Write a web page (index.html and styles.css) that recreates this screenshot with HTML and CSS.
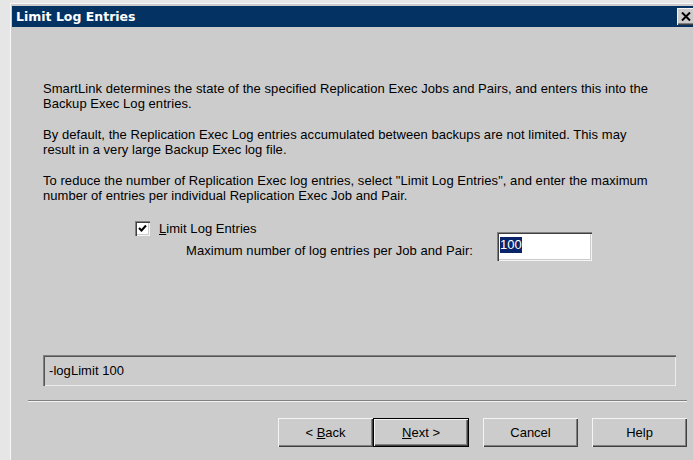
FILE: index.html
```html
<!DOCTYPE html>
<html lang="en">
<head>
<meta charset="utf-8">
<title>Limit Log Entries</title>
<link rel="stylesheet" href="styles.css">
</head>
<body>
<div class="window">
  <div class="titlebar">
    <span class="title">Limit Log Entries</span>
    <span class="close" aria-label="Close">
      <svg width="10" height="9" viewBox="0 0 10 9"><path d="M1 0.5 L9 8.5 M9 0.5 L1 8.5" stroke="#000" stroke-width="2" fill="none"/></svg>
    </span>
  </div>
  <div class="content">
    <p>SmartLink determines the state of the specified Replication Exec Jobs and Pairs, and enters this into the<br>Backup Exec Log entries.</p>
    <p>By default, the Replication Exec Log entries accumulated between backups are not limited. This may<br>result in a very large Backup Exec log file.</p>
    <p>To reduce the number of Replication Exec log entries, select "Limit Log Entries", and enter the maximum<br>number of entries per individual Replication Exec Job and Pair.</p>

    <label class="option">
      <span class="checkbox">
        <svg width="9" height="9" viewBox="0 0 9 9"><path d="M1 4 L3.5 6.5 L8 1.5" stroke="#000" stroke-width="2" fill="none"/></svg>
      </span>
      <span><u>L</u>imit Log Entries</span>
    </label>

    <div class="limit-row">
      <span class="limit-label">Maximum number of log entries per Job and Pair:</span>
      <span class="field"><span class="selected">100</span></span>
    </div>

    <div class="cmdline">-logLimit 100</div>
  </div>
  <div class="separator"></div>
  <div class="buttons">
    <span class="pair">
      <button class="btn">&lt; <u>B</u>ack</button>
      <button class="btn default"><u>N</u>ext &gt;</button>
    </span>
    <button class="btn">Cancel</button>
    <button class="btn">Help</button>
  </div>
</div>
</body>
</html>
```

FILE: styles.css
```css
html, body {
  margin: 0;
  height: 100%;
  overflow: hidden;
}

body {
  background: #e6e6e6;
  font-family: "Liberation Sans", Arial, sans-serif;
  font-size: 13px;
  letter-spacing: 0.05px;
  color: #000;
}

.window {
  margin: 3px 0 0 10px;
  width: 691px;
  height: 470px;
  box-sizing: border-box;
  border-top: 1px solid #f7f7f7;
  border-left: 1px solid #f7f7f7;
  background: #cccccc;
  padding: 2px 0 0 1px;
}

/* caption bar */
.titlebar {
  height: 21px;
  background: #043363;
  display: flex;
  align-items: center;
  justify-content: space-between;
  padding: 0 6px 0 4px;
}

.title {
  color: #fff;
  font-family: "DejaVu Sans", Verdana, sans-serif;
  font-weight: bold;
  font-size: 12.5px;
  letter-spacing: 0;
}

.close {
  width: 18px;
  height: 17px;
  box-sizing: border-box;
  background: #cccccc;
  display: flex;
  align-items: center;
  justify-content: center;
  box-shadow: inset 1px 1px #f4f4f4, inset -1px -1px #404040, inset -2px -2px #808080;
}

/* dialog body */
.content {
  padding: 54px 0 0 31px;
}

.content p {
  margin: 0 0 16px;
  line-height: 15px;
}

.option {
  display: flex;
  align-items: center;
  margin: 18px 0 0 92px;
  gap: 9px;
  line-height: 15px;
}

.checkbox {
  width: 15px;
  height: 15px;
  box-sizing: border-box;
  background: #fff;
  display: flex;
  align-items: center;
  justify-content: center;
  box-shadow: inset 1px 1px #808080, inset 2px 2px #404040, inset -1px -1px #f4f4f4, inset -2px -2px #cccccc;
}

/* the field row sits slightly under the checkbox row */
.limit-row {
  display: flex;
  align-items: flex-end;
  margin: -4px 0 0 143px;
}

.limit-label {
  margin-bottom: 3px;
  width: 311px;
  line-height: 15px;
}

.field {
  width: 95px;
  height: 29px;
  box-sizing: border-box;
  background: #fff;
  padding: 5px 0 0 3px;
  box-shadow: inset 1px 1px #808080, inset 2px 2px #404040, inset -1px -1px #f4f4f4, inset -2px -2px #cccccc;
}

.selected {
  background: #0a246a;
  color: #fff;
  line-height: 16px;
  display: inline-block;
}

.cmdline {
  margin: 94px 0 0 0;
  width: 633px;
  height: 31px;
  box-sizing: border-box;
  padding: 8px 0 0 6px;
  line-height: 15px;
  box-shadow: inset 1px 1px #808080, inset 2px 2px #555555, inset -1px -1px #ececec, inset -2px -2px #cccccc;
}

.separator {
  margin: 14px 0 0 16px;
  width: 659px;
  height: 1px;
  background: #808080;
  border-bottom: 1px solid #f4f4f4;
}

/* command buttons */
.buttons {
  display: flex;
  justify-content: flex-end;
  gap: 14px;
  margin: 16px 0 0 0;
  padding-right: 14px;
}

.pair {
  display: flex;
}

.btn {
  width: 95px;
  height: 29px;
  margin: 0;
  border: 0;
  background: #cccccc;
  font: inherit;
  color: #000;
  padding: 0;
  box-shadow: inset 1px 1px #f4f4f4, inset -1px -1px #404040, inset -2px -2px #808080;
}

.btn.default {
  width: 96px;
  border: 1px solid #000;
}
```
